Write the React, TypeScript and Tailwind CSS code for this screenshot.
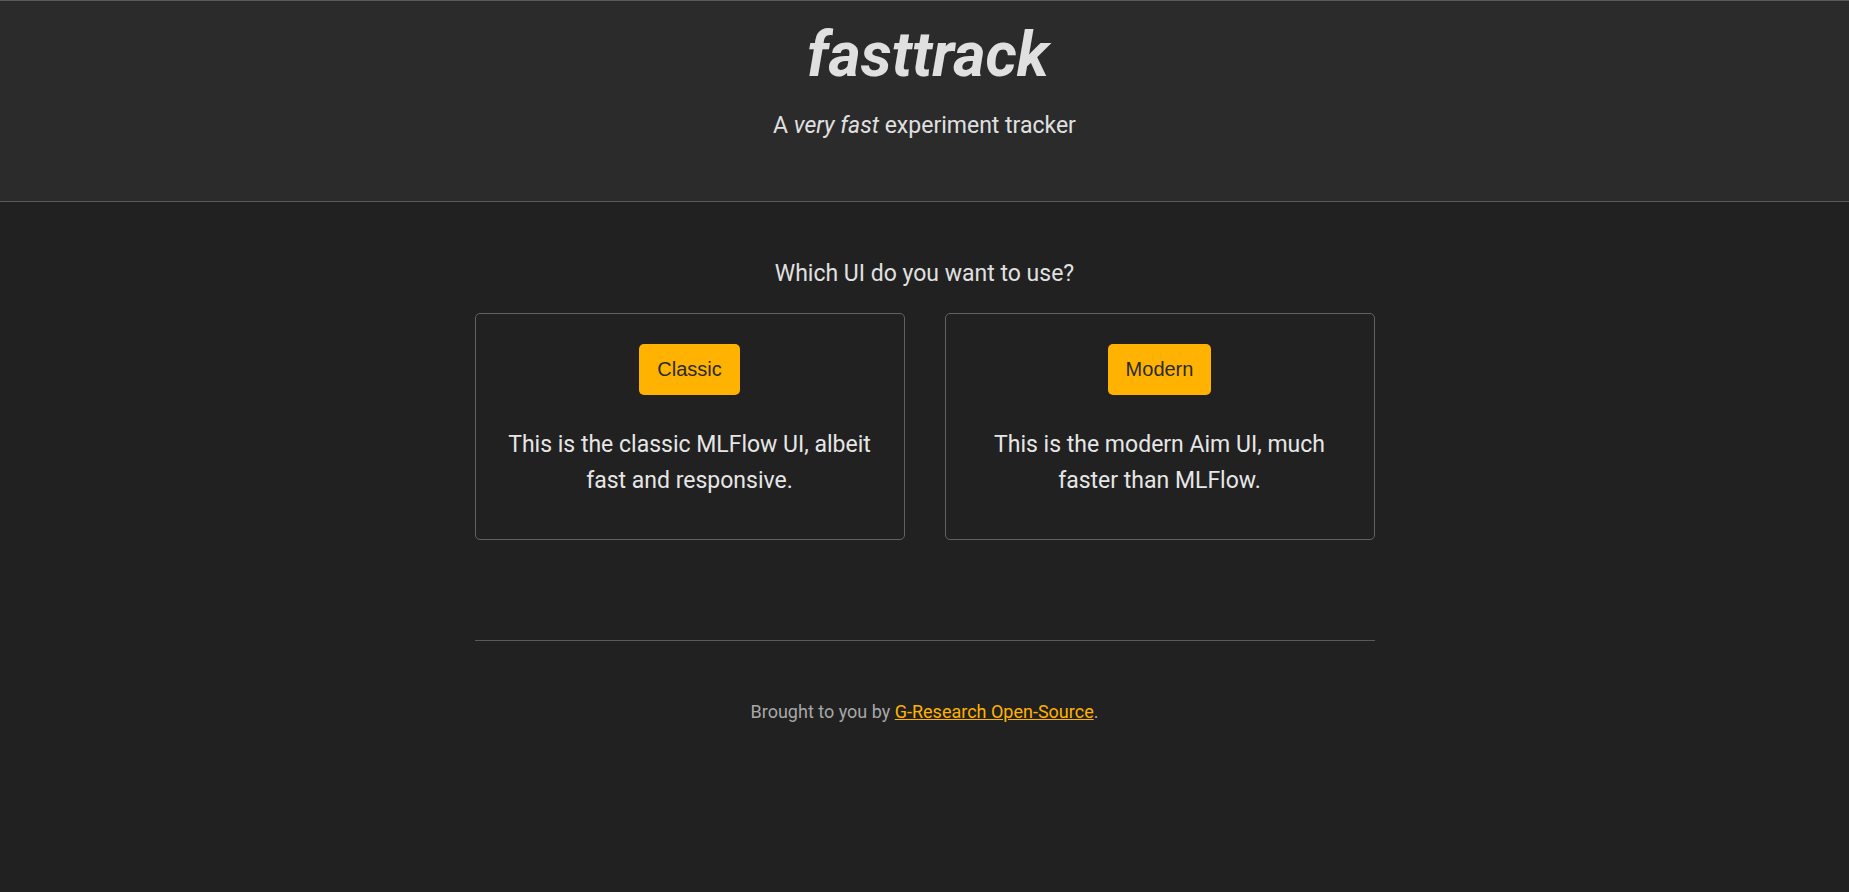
import React from "react";

export default function App() {
  const roboto = { fontFamily: "Roboto, 'Noto Sans', sans-serif" };
  return (
    <div className="min-h-screen w-full bg-[#212121] text-[#e0e0e0]" style={roboto}>
      <header className="bg-[#2b2b2b] border-t border-b border-[#5a5a5a] pt-[18px] pb-[57px] flex flex-col items-center">
        <h1 className="pl-[7px] text-[62px] leading-[72px] font-bold italic text-[#e0e0e0]">fasttrack</h1>
        <p className="mt-[17px] text-[23px] leading-[36px] text-[#e0e0e0]">
          A <em>very fast</em> experiment tracker
        </p>
      </header>
      <main className="mx-auto w-[900px] flex flex-col items-center">
        <p className="mt-[54px] text-[23px] leading-[36px] text-[#e0e0e0]">Which UI do you want to use?</p>
        <div className="mt-[21px] grid grid-cols-2 gap-[40px] w-full">
          {[
            { label: "Classic", lines: ["This is the classic MLFlow UI, albeit", "fast and responsive."] },
            { label: "Modern", lines: ["This is the modern Aim UI, much", "faster than MLFlow."] },
          ].map((c) => (
            <div
              key={c.label}
              className="h-[227px] border border-[#626262] rounded-[5px] flex flex-col items-center pt-[30px]"
            >
              <button
                className="bg-[#ffb300] text-[#2a2a2a] rounded-[5px] px-[18px] py-[14px] text-[20px] leading-[23px]"
                style={{ fontFamily: "'Liberation Sans', Arial, sans-serif" }}
              >
                {c.label}
              </button>
              <p className="mt-[32px] text-[23px] leading-[36px] text-center text-[#e6e6e6]">
                {c.lines[0]}
                <br />
                {c.lines[1]}
              </p>
            </div>
          ))}
        </div>
        <hr className="mt-[100px] w-full border-0 border-t border-[#5a5a5a]" />
        <p className="mt-[57px] text-[18px] leading-[27px] text-[#a8a8a8]">
          Brought to you by{" "}
          <a href="#" className="text-[#ffb300] underline">
            G-Research Open-Source
          </a>
          .
        </p>
      </main>
    </div>
  );
}
